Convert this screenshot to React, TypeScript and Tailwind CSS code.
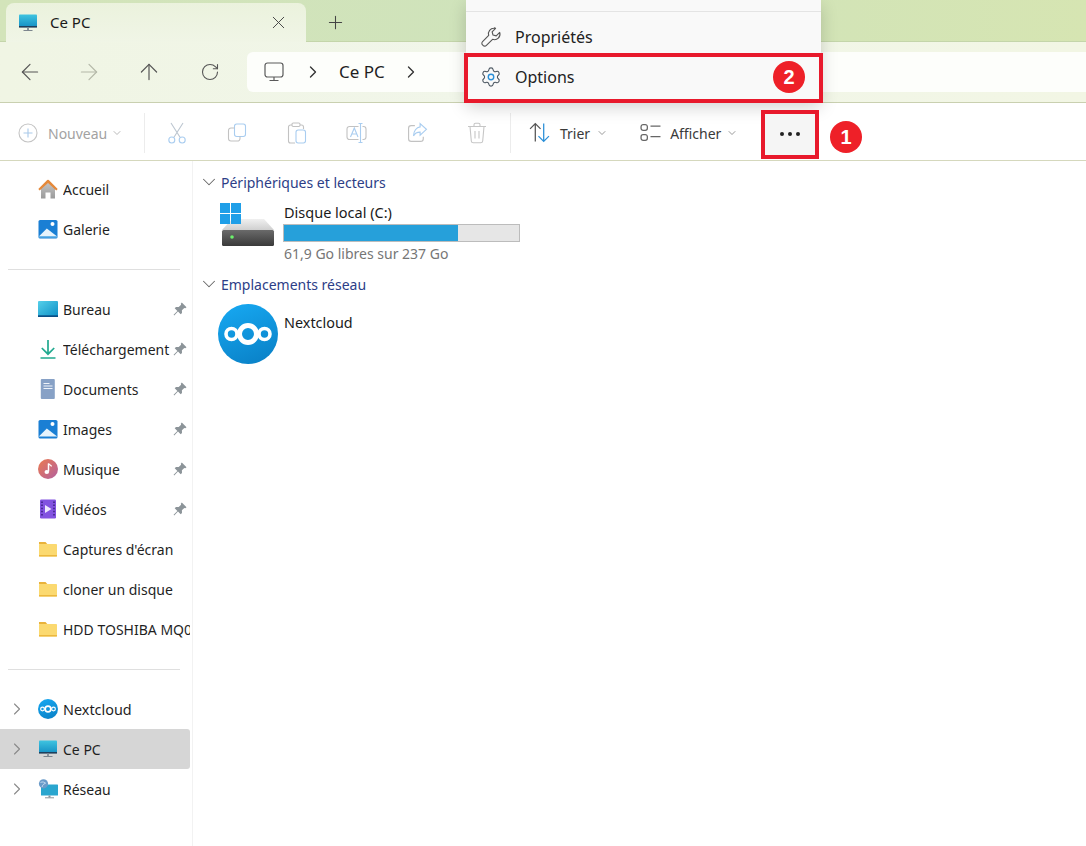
import React, { useId } from "react";
import { ArrowLeft, ArrowRight, ArrowUp, RotateCw, ChevronRight, ChevronDown, X, Plus } from "lucide-react";

function PcIcon({ className = "w-5 h-5" }: { className?: string }) {
  const id = useId();
  return (
    <svg viewBox="0 0 20 20" className={className}>
      <defs>
        <linearGradient id={id} x1="0" y1="0" x2="0" y2="1">
          <stop offset="0" stopColor="#3fc4e0" />
          <stop offset="1" stopColor="#1590c4" />
        </linearGradient>
      </defs>
      <rect x="1" y="1.500" width="18" height="12.500" rx="0.800" fill={`url(#${id})`} />
      <rect x="1" y="13" width="18" height="1.600" fill="#1f3f5c" />
      <rect x="9" y="14.600" width="2" height="2.600" fill="#8a949c" />
      <rect x="5.500" y="17" width="9" height="1" fill="#7d868e" />
    </svg>
  );
}
function HomeIcon() {
  const id = useId();
  return (
    <svg viewBox="0 0 20 20" className="h-5 w-5">
      <defs>
        <linearGradient id={id} x1="0" y1="0" x2="0" y2="1">
          <stop offset="0" stopColor="#c4c4c4" />
          <stop offset="1" stopColor="#9a9a9a" />
        </linearGradient>
      </defs>
      <path d="M3 9 10 3.500 17 9v10.500h-4.500v-6h-5v6H3z" fill={`url(#${id})`} />
      <path d="M0.300 10 9.200 1.100a1.100 1.100 0 0 1 1.600 0L19.700 10 18.300 11.600 10 4 1.700 11.600z" fill="#e5893a" />
    </svg>
  );
}
function PictureIcon({ stack = false }: { stack?: boolean }) {
  return (
    <svg viewBox="0 0 20 20" className="h-5 w-5">
      <rect x="0.500" y="1" width="19" height="18.500" rx="1.600" fill="#1a7fd4" />
      <path d="M0.800 17.500 8.800 9.500l10.400 8z" fill="#e6f3fc" />
      <circle cx="14.500" cy="5" r="2" fill="#fff" />
      {stack && <path d="M0.800 18h18.400" stroke="#62b5ea" strokeWidth="1.200" />}
    </svg>
  );
}
function DesktopIcon() {
  const id = useId();
  return (
    <svg viewBox="0 0 20 20" className="h-5 w-5">
      <defs>
        <linearGradient id={id} x1="0" y1="0" x2="1" y2="1">
          <stop offset="0" stopColor="#55d0ea" />
          <stop offset="1" stopColor="#0d8fc6" />
        </linearGradient>
      </defs>
      <rect x="0" y="2" width="20" height="16" rx="1" fill={`url(#${id})`} />
      <rect x="0" y="16.300" width="20" height="1.700" fill="#0b4f86" />
    </svg>
  );
}
function DownloadIcon() {
  return (
    <svg viewBox="0 0 20 20" className="h-5 w-5" fill="none" stroke="#21a98f" strokeWidth="1.700">
      <path d="M10 1v14M3.800 9 10 15.200 16.200 9M2.500 19h15" />
    </svg>
  );
}
function DocIcon() {
  return (
    <svg viewBox="0 0 20 20" className="h-5 w-5">
      <rect x="2.800" y="0" width="14" height="20" rx="1" fill="#87a1c6" />
      <path d="M5.500 4.500h6M5.500 7h9M5.500 9.500h9" stroke="#eef3fa" strokeWidth="1" />
    </svg>
  );
}
function MusicIcon() {
  const id = useId();
  return (
    <svg viewBox="0 0 20 20" className="h-5 w-5">
      <defs>
        <linearGradient id={id} x1="0" y1="0" x2="1" y2="1">
          <stop offset="0" stopColor="#ec7b4f" />
          <stop offset="1" stopColor="#b2609f" />
        </linearGradient>
      </defs>
      <circle cx="10" cy="10" r="10" fill={`url(#${id})`} />
      <path d="M10.500 4.500v8" stroke="#fff" strokeWidth="1.500" />
      <path d="M10.500 4.500c1 1.600 2.600 1.700 3 3" stroke="#fff" strokeWidth="1.200" fill="none" />
      <ellipse cx="8.800" cy="13" rx="2.300" ry="1.900" fill="#fff" />
    </svg>
  );
}
function VideoIcon() {
  return (
    <svg viewBox="0 0 20 20" className="h-5 w-5">
      <rect x="2" y="0.500" width="16" height="19" rx="1.200" fill="#8253e0" />
      <path d="M7 6v8l6.500-4z" fill="#eee8fd" />
      <path d="M4 2.500v15M16 2.500v15" stroke="#3a1f80" strokeWidth="1.500" strokeDasharray="1.500 1.600" />
    </svg>
  );
}
function FolderIcon() {
  return (
    <svg viewBox="0 0 20 20" className="h-5 w-5">
      <path d="M1 3h6.500l2 2.200H1z" fill="#e9b23a" />
      <rect x="1" y="5" width="18" height="12.500" rx="0.800" fill="#fbd970" />
      <rect x="1" y="16" width="18" height="1.500" fill="#ecb83f" />
    </svg>
  );
}
function NextcloudIcon({ className = "h-5 w-5" }: { className?: string }) {
  const id = useId();
  return (
    <svg viewBox="0 0 60 60" className={className}>
      <defs>
        <linearGradient id={id} x1="0.300" y1="0" x2="0.700" y2="1">
          <stop offset="0" stopColor="#16a6ef" />
          <stop offset="1" stopColor="#0a82c8" />
        </linearGradient>
      </defs>
      <circle cx="30" cy="30" r="30" fill={`url(#${id})`} />
      <g fill="none" stroke="#fff">
        <circle cx="30" cy="30" r="8.500" strokeWidth="5" />
        <circle cx="13.500" cy="30" r="5.500" strokeWidth="3.600" />
        <circle cx="46.500" cy="30" r="5.500" strokeWidth="3.600" />
      </g>
    </svg>
  );
}
function NetworkIcon() {
  return (
    <svg viewBox="0 0 20 20" className="h-5 w-5">
      <rect x="3" y="5.500" width="17" height="11" rx="0.600" fill="#2aa6cf" />
      <rect x="10.500" y="16.500" width="2" height="2" fill="#8a949c" />
      <rect x="7" y="18.300" width="9" height="1" fill="#8a949c" />
      <circle cx="5.500" cy="4.800" r="4.600" fill="#6a9bc9" />
      <path d="M2.500 3.500c2-1.200 4-.3 5.500 1M4 8c.6-2 1.400-3 3-3.500" stroke="#d8e8f6" strokeWidth="0.800" fill="none" />
    </svg>
  );
}
function PinIcon() {
  return (
    <svg viewBox="0 0 14 14" className="h-[14px] w-[14px]">
      <path d="M8.800 0.500 13.500 5.200 12.300 6.200 11.300 5.900 8.900 8.300 9 11 7.700 12.300 5 9.600 1.200 13.400 0.600 12.800 4.400 9 1.700 6.300 3 5 5.700 5.100 8.100 2.700 7.800 1.700z" fill="#8c9499" />
    </svg>
  );
}

function NavRow({ icon, label, pin, chevron, active, wide }: { icon: React.ReactNode; label: string; pin?: boolean; chevron?: boolean; active?: boolean; wide?: boolean }) {
  return (
    <div className={`relative flex h-10 w-[190px] items-center rounded-r-[3px] ${active ? "bg-[#d6d6d6]" : ""}`}>
      <div className="flex w-[38px] shrink-0 items-center justify-start pl-[7px]">
        {chevron && <ChevronRight className="h-5 w-5 text-[#8a8a8a]" strokeWidth={1.300} />}
      </div>
      <div className="flex w-[25px] shrink-0 items-center">{icon}</div>
      <span className={`min-w-0 flex-1 overflow-hidden whitespace-nowrap pt-[1px] text-[#1f1f1f] ${wide ? "text-[14.400px]" : ""}`}>{label}</span>
      {pin && <span className="absolute right-[3px] top-[13px]"><PinIcon /></span>}
    </div>
  );
}
function Divider() {
  return (
    <div className="flex h-10 items-center pl-2">
      <div className="h-px w-[172px] bg-[#dfdfdf]" />
    </div>
  );
}
function ToolIcon({ children }: { children: React.ReactNode }) {
  return <div className="flex h-10 w-[60px] items-center justify-center">{children}</div>;
}
function Section({ label }: { label: string }) {
  return (
    <div className="flex h-5 items-center text-[#2d3e87]">
      <ChevronDown className="ml-[5px] mr-[1px] h-[22px] w-[22px] text-[#666]" strokeWidth={1.100} />
      <span>{label}</span>
    </div>
  );
}

const BLUE = "#a9cdf0";
const GRAY = "#c2c2c2";

export default function App() {
  return (
    <div className="relative h-[846px] w-[1086px] overflow-hidden bg-white text-[14px] [font-family:'Noto_Sans',sans-serif]">
      {/* tabs */}
      <div className="flex h-[42px] items-end border-b border-[#c4d5aa] bg-gradient-to-r from-[#d3e4ba] via-[#cfe3bb] to-[#d6e5b2] pl-[6px]">
        <div className="flex h-[39px] w-[300px] translate-y-px items-center rounded-t-lg bg-gradient-to-b from-[#ebf2dd] to-[#f0f5e6] pl-3 pr-[17px] text-[15px] text-[#1a1a1a]">
          <PcIcon className="h-[20px] w-[20px]" />
          <span className="ml-[12px] flex-1">Ce PC</span>
          <X className="h-[21px] w-[21px] text-[#444]" strokeWidth={1.100} />
        </div>
        <div className="mb-[8px] ml-[19px] text-[#444]">
          <Plus className="h-[21px] w-[21px]" strokeWidth={1.200} />
        </div>
      </div>
      {/* address row */}
      <div className="flex h-[61px] items-center border-b border-[#c9d0b0] bg-gradient-to-r from-[#f0f5e4] via-[#f1f6ea] to-[#f2f6e4]">
        <div className="flex w-[247px] items-center text-[#555]">
          <div className="flex w-[59px] justify-center"><ArrowLeft className="h-[26px] w-[26px]" strokeWidth={1.100} /></div>
          <div className="flex w-[60px] justify-center text-[#b4b8a8]"><ArrowRight className="h-[26px] w-[26px]" strokeWidth={1.100} /></div>
          <div className="flex w-[60px] justify-center"><ArrowUp className="h-[26px] w-[26px]" strokeWidth={1.100} /></div>
          <div className="flex w-[61px] justify-center"><RotateCw className="h-[20px] w-[20px]" strokeWidth={1.300} /></div>
        </div>
        <div className="flex h-10 flex-1 items-center rounded-l-md bg-[#fdfefb] pl-[17px] text-[17px] text-[#1f1f1f]">
          <svg viewBox="0 0 20 20" className="h-[20px] w-[20px]" fill="none" stroke="#5a5a5a" strokeWidth="1.200">
            <rect x="1" y="1" width="18" height="14" rx="2.500" />
            <path d="M10 15v3M5.500 18.500h9" />
          </svg>
          <ChevronRight className="ml-[19px] h-5 w-5 text-[#333]" strokeWidth={1.600} />
          <span className="ml-[16px]">Ce PC</span>
          <ChevronRight className="ml-[16px] h-5 w-5 text-[#333]" strokeWidth={1.600} />
        </div>
      </div>
      {/* toolbar */}
      <div className="flex h-[58px] items-center border-b border-[#d5d8bd] bg-white pt-[2px]">
        <div className="flex w-[144px] items-center pl-[18px] text-[#a2a2a2]">
          <svg viewBox="0 0 20 20" className="h-5 w-5" fill="none">
            <circle cx="10" cy="10" r="9" stroke="#c4c4c4" strokeWidth="1.100" />
            <path d="M10 5.500v9M5.500 10h9" stroke="#a9c9ea" strokeWidth="1.100" />
          </svg>
          <span className="ml-[10px] pt-[1px]">Nouveau</span>
          <ChevronDown className="ml-[4px] h-3 w-3" strokeWidth={1.500} />
        </div>
        <div className="h-10 w-px bg-[#ececec]" />
        <div className="flex pl-[2px]">
          <ToolIcon>
            <svg viewBox="0 0 20 22" className="h-[22px] w-5" fill="none" strokeWidth="1.100">
              <path d="M4 1l9.200 14.500M16 1 6.800 15.500" stroke="#bcc6d0" />
              <circle cx="4.800" cy="18" r="3" stroke={BLUE} />
              <circle cx="15.200" cy="18" r="3" stroke={BLUE} />
            </svg>
          </ToolIcon>
          <ToolIcon>
            <svg viewBox="0 0 20 20" className="h-5 w-5" fill="none" strokeWidth="1.100">
              <rect x="7.500" y="1" width="11" height="12.500" rx="2.200" stroke={BLUE} />
              <path d="M7.500 5H4a2.500 2.500 0 0 0-2.500 2.500v8A2.500 2.500 0 0 0 4 18h6.500a2.500 2.500 0 0 0 2.500-2.500v-2" stroke={GRAY} />
            </svg>
          </ToolIcon>
          <ToolIcon>
            <svg viewBox="0 0 20 22" className="h-[22px] w-5" fill="none" strokeWidth="1.100">
              <path d="M5 3H3.500A2 2 0 0 0 1.500 5v14a2 2 0 0 0 2 2H8M13 3h1.500a2 2 0 0 1 2 2v2" stroke={GRAY} />
              <rect x="5" y="1" width="8" height="3.500" rx="1.200" stroke={GRAY} />
              <rect x="9" y="8" width="9.500" height="13" rx="2.200" stroke={BLUE} />
            </svg>
          </ToolIcon>
          <ToolIcon>
            <svg viewBox="0 0 22 22" className="h-[22px] w-[22px]" fill="none" strokeWidth="1.100">
              <path d="M12.500 4.500H3.500a2.500 2.500 0 0 0-2.500 2.500v8a2.500 2.500 0 0 0 2.500 2.500h9M16.500 4.500h1a2.500 2.500 0 0 1 2.500 2.500v8a2.500 2.500 0 0 1-2.500 2.500h-1" stroke={GRAY} />
              <path d="M14.500 1.500v19M12.500 1.500h4M12.500 20.500h4" stroke={BLUE} />
              <path d="m4.500 15 3.800-9 3.700 9M6 12h5" stroke={BLUE} />
            </svg>
          </ToolIcon>
          <ToolIcon>
            <svg viewBox="0 0 20 20" className="h-[21px] w-[21px]" fill="none" strokeWidth="1.100">
              <path d="M7.500 3.500H4A2.500 2.500 0 0 0 1.500 6v10A2.500 2.500 0 0 0 4 18.500h9a2.500 2.500 0 0 0 2.500-2.500v-2" stroke={GRAY} />
              <path d="M12.500 1.500 18.500 7l-6 5.500V9.700c-3 0-5 1-6.300 3.500C6.200 8.700 9 5 12.500 4.700z" stroke={BLUE} />
            </svg>
          </ToolIcon>
          <ToolIcon>
            <svg viewBox="0 0 20 22" className="h-[22px] w-5" fill="none" stroke="#c6c6c6" strokeWidth="1.100">
              <path d="M1 4.500h18M7 4.500V2.800A1.500 1.500 0 0 1 8.500 1.300h3A1.500 1.500 0 0 1 13 2.800v1.700" />
              <path d="M3 4.500 4.300 19a2 2 0 0 0 2 1.800h7.400a2 2 0 0 0 2-1.800L17 4.500" />
              <path d="M8 9v7.500M12 9v7.500" />
            </svg>
          </ToolIcon>
        </div>
        <div className="ml-[3px] h-10 w-px bg-[#ececec]" />
        <div className="flex items-center text-[#3a3a3a]">
          <svg viewBox="0 0 20 20" className="ml-[18px] h-[21px] w-[21px]" fill="none" strokeWidth="1.200">
            <path d="M6 18.500V1.500M1 6.500l5-5 5 5" stroke="#555" />
            <path d="M14 1.500v17M9 13.500l5 5 5-5" stroke="#2a8fd8" />
          </svg>
          <span className="ml-[10px] pt-[1px]">Trier</span>
          <ChevronDown className="ml-[6px] h-3 w-3 text-[#777]" strokeWidth={1.500} />
          <svg viewBox="0 0 20 20" className="ml-[32px] h-[21px] w-[21px]" fill="none" stroke="#666" strokeWidth="1.200">
            <rect x="1" y="2.500" width="6" height="5.500" rx="2" />
            <rect x="1" y="12" width="6" height="5.500" rx="2" />
            <path d="M10 4h9.500M10 14h9.500" />
          </svg>
          <span className="ml-[9px] pt-[1px]">Afficher</span>
          <ChevronDown className="ml-[5px] h-3 w-3 text-[#777]" strokeWidth={1.500} />
        </div>
      </div>
      {/* body */}
      <div className="flex h-[685px]">
        <nav className="w-[193px] shrink-0 border-r border-[#f2f2f2] pt-2">
          <NavRow icon={<HomeIcon />} label="Accueil" />
          <NavRow icon={<PictureIcon stack />} label="Galerie" />
          <Divider />
          <NavRow icon={<DesktopIcon />} label="Bureau" pin />
          <NavRow icon={<DownloadIcon />} label="Téléchargement" pin />
          <NavRow icon={<DocIcon />} label="Documents" pin />
          <NavRow icon={<PictureIcon />} label="Images" pin />
          <NavRow icon={<MusicIcon />} label="Musique" pin />
          <NavRow icon={<VideoIcon />} label="Vidéos" pin />
          <NavRow icon={<FolderIcon />} label="Captures d'écran" />
          <NavRow icon={<FolderIcon />} label="cloner un disque" />
          <NavRow icon={<FolderIcon />} label="HDD TOSHIBA MQ01ABD100" />
          <Divider />
          <NavRow icon={<NextcloudIcon />} label="Nextcloud" chevron wide />
          <NavRow icon={<PcIcon />} label="Ce PC" chevron active />
          <NavRow icon={<NetworkIcon />} label="Réseau" chevron />
        </nav>
        <main className="flex-1 pt-[11px]">
          <Section label="Périphériques et lecteurs" />
          <div className="mt-[11px] flex h-[62px] pl-[27px]">
            <svg viewBox="0 0 56 46" className="h-[46px] w-[56px]">
              <defs>
                <linearGradient id="driveTop" x1="0" y1="0" x2="0" y2="1">
                  <stop offset="0" stopColor="#f0f0f0" />
                  <stop offset="1" stopColor="#cfcfcf" />
                </linearGradient>
                <linearGradient id="driveFront" x1="0" y1="0" x2="0" y2="1">
                  <stop offset="0" stopColor="#6a6a6a" />
                  <stop offset="1" stopColor="#3a3a3a" />
                </linearGradient>
              </defs>
              <path d="M12 16h32l10 11H2z" fill="url(#driveTop)" />
              <rect x="2" y="27" width="52" height="16" rx="1.500" fill="url(#driveFront)" />
              <circle cx="12" cy="34" r="1.800" fill="#6cf06c" />
              <g fill="#1f9fe8">
                <rect x="0" y="0" width="10" height="10" />
                <rect x="11" y="0" width="10" height="10" />
                <rect x="0" y="11" width="10" height="10" />
                <rect x="11" y="11" width="10" height="10" />
              </g>
            </svg>
            <div className="ml-[8px] text-[#1a1a1a]">
              <div className="mt-[-1px] text-[14.500px] leading-5">Disque local (C:)</div>
              <div className="ml-[-1px] mt-[2px] h-[18px] w-[237px] border border-[#bcbcbc] bg-[#e6e6e6]">
                <div className="h-full bg-[#26a0da]" style={{ width: "73.900%" }} />
              </div>
              <div className="mt-[2px] leading-5 text-[#767676]">61,9 Go libres sur 237 Go</div>
            </div>
          </div>
          <div className="mt-[9px]">
            <Section label="Emplacements réseau" />
          </div>
          <div className="mt-[10px] flex pl-[25px]">
            <NextcloudIcon className="h-[60px] w-[60px]" />
            <div className="ml-[6px] mt-[9px] text-[14.400px] leading-5 text-[#1a1a1a]">Nextcloud</div>
          </div>
        </main>
      </div>

      {/* context menu fragment */}
      <div className="absolute left-[466px] top-0 h-[101px] w-[355px] bg-[#f9f9f9] text-[16px] text-[#222] shadow-[0_6px_16px_rgba(0,0,0,0.180)]">
        <div className="mt-[11px] h-px bg-[#e4e4e4]" />
        <div className="flex h-10 items-center pl-[14px] pt-[9px]">
          <svg viewBox="0 0 24 24" className="h-[22px] w-[22px]" fill="none" stroke="#555" strokeWidth="1.200" strokeLinejoin="round">
            <path d="M15.500 2.500a6 6 0 0 0-6 7.800L2.800 17a2.600 2.600 0 0 0 0 3.700l.5.500a2.600 2.600 0 0 0 3.700 0l6.700-6.700a6 6 0 0 0 7.800-7.500l-3.800 3.800-3.500-1-1-3.500 3.800-3.800a6 6 0 0 0-1.500-.500z" />
          </svg>
          <span className="ml-[13px]">Propriétés</span>
        </div>
        <div className="flex h-10 items-center pl-[14px] pt-[9px]">
          <svg viewBox="0 0 24 24" className="h-[22px] w-[22px]" fill="none" strokeWidth="1.200">
            <path stroke="#4a5560" d="M9.671 4.136a2.340 2.340 0 0 1 4.659 0 2.340 2.340 0 0 0 3.319 1.915 2.340 2.340 0 0 1 2.330 4.033 2.340 2.340 0 0 0 0 3.831 2.340 2.340 0 0 1-2.330 4.033 2.340 2.340 0 0 0-3.319 1.915 2.340 2.340 0 0 1-4.659 0 2.340 2.340 0 0 0-3.320-1.915 2.340 2.340 0 0 1-2.330-4.033 2.340 2.340 0 0 0 0-3.831A2.340 2.340 0 0 1 6.350 6.051a2.340 2.340 0 0 0 3.319-1.915" />
            <circle cx="12" cy="12" r="3" stroke="#2a8fd8" strokeWidth="1.500" />
          </svg>
          <span className="ml-[13px]">Options</span>
        </div>
      </div>
      {/* annotations */}
      <div className="absolute left-[464px] top-[53px] h-[50px] w-[359px] border-4 border-[#e8192c]" />
      <div className="absolute left-[761px] top-[110px] flex h-[49px] w-[58px] items-center justify-center gap-[4px] border-4 border-[#e8192c] bg-[#f5f5f5] pb-[2px]">
        <span className="h-1 w-1 rounded-full bg-[#222]" />
        <span className="h-1 w-1 rounded-full bg-[#222]" />
        <span className="h-1 w-1 rounded-full bg-[#222]" />
      </div>
      <div className="absolute left-[830px] top-[121px] flex h-8 w-8 items-center justify-center rounded-full bg-[#ee2028] text-[20px] font-bold text-white [font-family:'Liberation_Sans',sans-serif]">1</div>
      <div className="absolute left-[773px] top-[61px] flex h-8 w-8 items-center justify-center rounded-full bg-[#ee2028] text-[20px] font-bold text-white [font-family:'Liberation_Sans',sans-serif]">2</div>
    </div>
  );
}
